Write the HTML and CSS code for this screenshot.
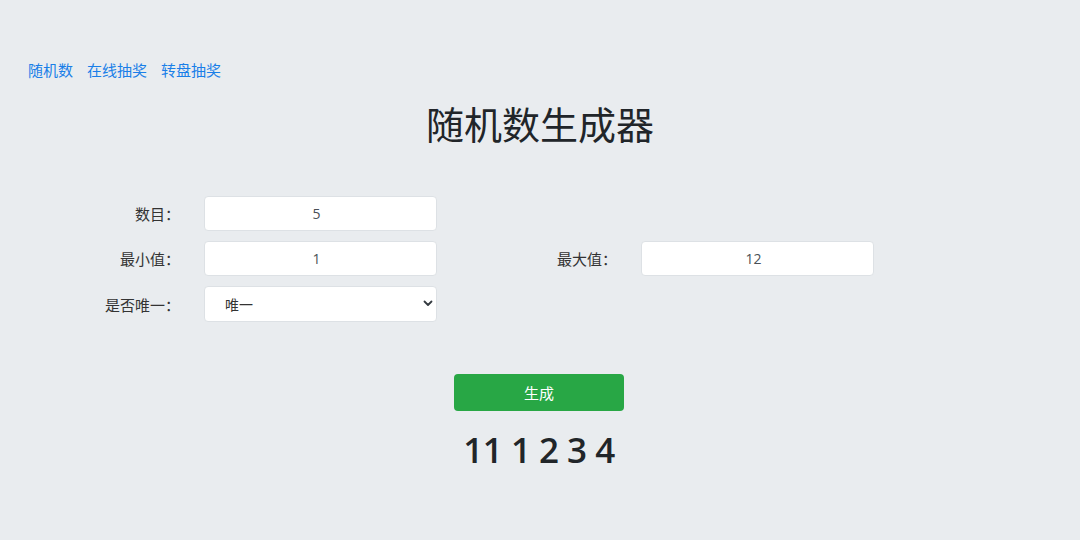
FILE: index.html
```html
<!DOCTYPE html>
<html lang="zh-CN">
<head>
    <meta charset="UTF-8">
    <meta name="viewport" content="width=device-width, initial-scale=1.0">
    <title>随机数生成器</title>
    <link rel="stylesheet" href="styles.css">
</head>
<body>
    <nav class="top-nav">
        <a href="#">随机数</a>
        <a href="#">在线抽奖</a>
        <a href="#">转盘抽奖</a>
    </nav>

    <h1 class="page-title">随机数生成器</h1>

    <form class="gen-form">
        <div class="form-row">
            <div class="field">
                <label for="count">数目：</label>
                <input type="text" id="count" value="5">
            </div>
        </div>
        <div class="form-row">
            <div class="field">
                <label for="min">最小值：</label>
                <input type="text" id="min" value="1">
            </div>
            <div class="field">
                <label for="max">最大值：</label>
                <input type="text" id="max" value="12">
            </div>
        </div>
        <div class="form-row">
            <div class="field">
                <label for="unique">是否唯一：</label>
                <div class="select-wrap">
                    <select id="unique">
                        <option>唯一</option>
                        <option>不唯一</option>
                    </select>
                    <svg class="chevron" width="10" height="7" viewBox="0 0 10 7"><path d="M1.5 1.5 L5 5 L8.5 1.5" fill="none" stroke="#343a40" stroke-width="1.8" stroke-linecap="round" stroke-linejoin="round"/></svg>
                </div>
            </div>
        </div>

        <div class="actions">
            <button type="button" id="generate">生成</button>
        </div>
    </form>

    <div id="result">11 1 2 3 4</div>
</body>
</html>
```

FILE: styles.css
```css
body {
    margin: 0;
    padding: 0;
    background-color: #e9ecef;
    color: #212529;
    font-family: "Open Sans", "Noto Sans CJK SC", sans-serif;
}
.top-nav {
    display: flex;
    gap: 14px;
    padding: 59px 0 0 28px;
    font-size: 15px;
    line-height: 22px;
}
.top-nav a {
    color: #1a7fe8;
    text-decoration: none;
}
.page-title {
    margin: 20px 0 0;
    text-align: center;
    font-size: 38px;
    line-height: 46px;
    font-weight: 400;
    color: #212529;
}
.gen-form {
    margin-top: 49px;
}
.form-row {
    display: flex;
    margin-bottom: 10px;
}
.field {
    display: flex;
    align-items: center;
    width: 437px;
}
.field label {
    width: 180px;
    margin-right: 24px;
    text-align: right;
    font-family: "Open Sans", "Noto Sans CJK TC", sans-serif;
    font-size: 15px;
    color: #333;
}
.field input {
    box-sizing: border-box;
    width: 233px;
    height: 35px;
    border: 1px solid #dde1e5;
    border-radius: 4px;
    background: #fff;
    text-align: center;
    font-family: inherit;
    font-size: 14px;
    color: #495057;
    padding: 0 18px 0 10px;
}
.select-wrap {
    position: relative;
    width: 233px;
}
.select-wrap select {
    box-sizing: border-box;
    width: 100%;
    height: 36px;
    border: 1px solid #dde1e5;
    border-radius: 4px;
    background: #fff;
    appearance: none;
    -webkit-appearance: none;
    font-family: inherit;
    font-size: 14px;
    color: #333;
    padding: 0 20px;
}
.chevron {
    position: absolute;
    right: 4px;
    top: 14px;
    pointer-events: none;
}
.actions {
    display: flex;
    justify-content: center;
    margin-top: 52px;
}
#generate {
    width: 170px;
    height: 37px;
    border: none;
    border-radius: 4px;
    background-color: #28a745;
    color: #fff;
    font-family: inherit;
    font-size: 15px;
    cursor: pointer;
    margin-left: -2px;
}
#result {
    margin-top: 19px;
    text-align: center;
    font-size: 35px;
    line-height: 40px;
    font-weight: 600;
    color: #212529;
    letter-spacing: -0.5px;
    margin-left: -2px;
}
```
